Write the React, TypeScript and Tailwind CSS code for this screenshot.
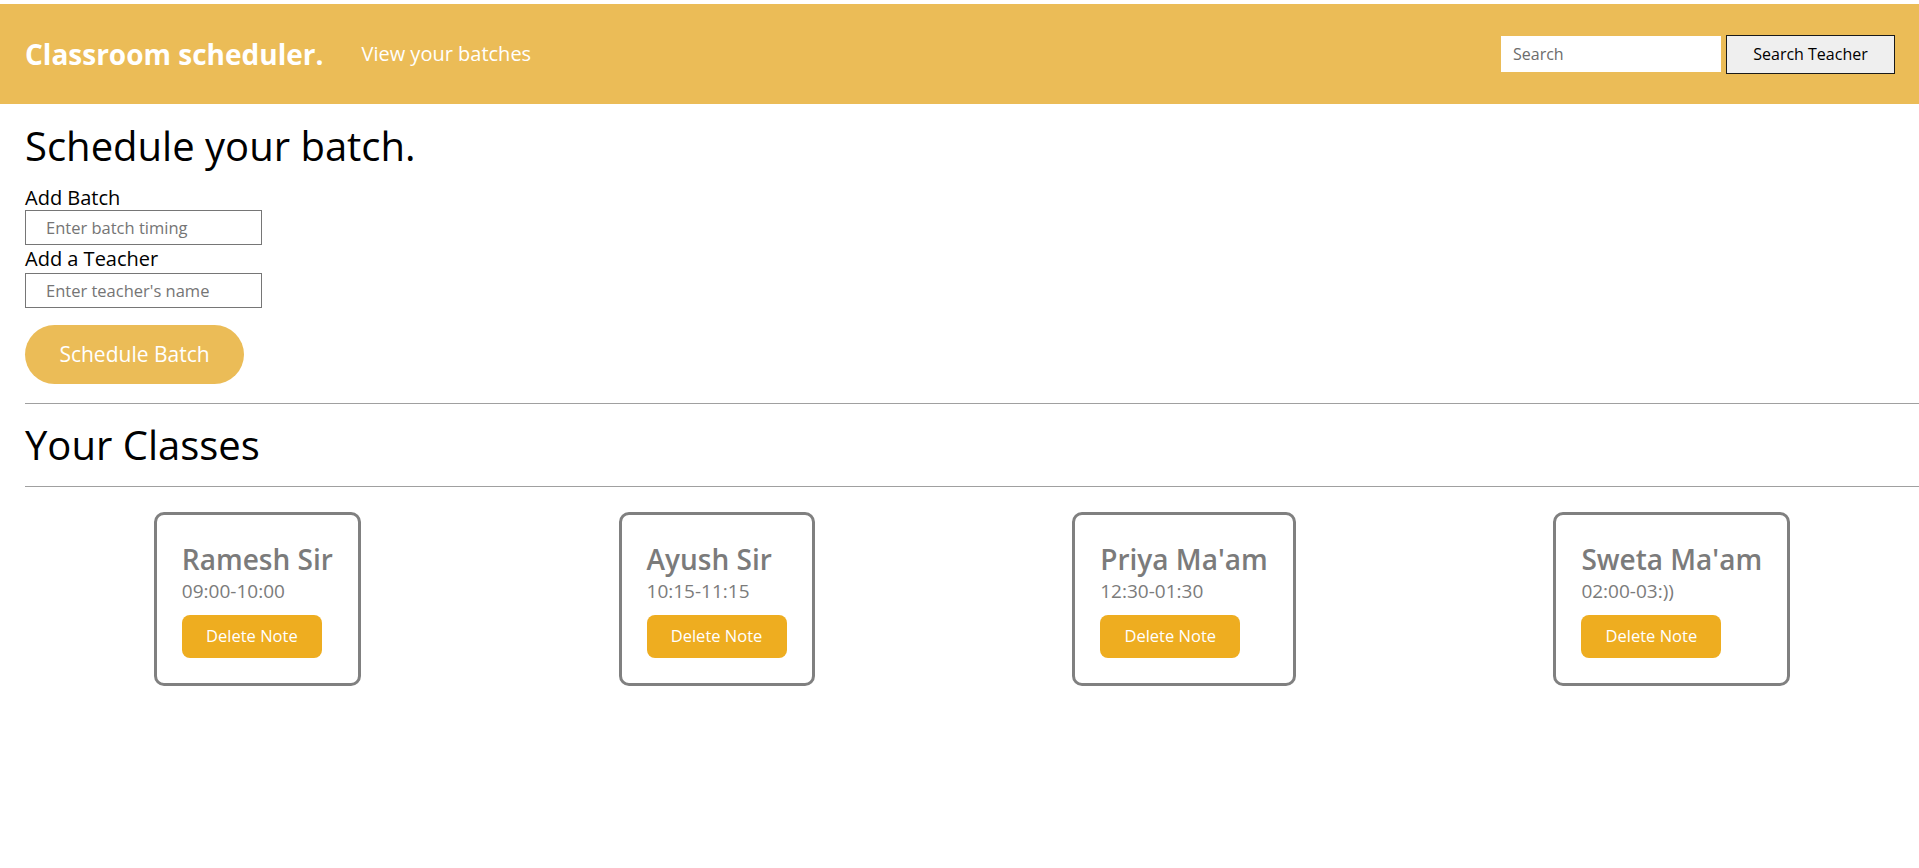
import React from "react";

const classes = [
  { name: "Ramesh Sir", time: "09:00-10:00" },
  { name: "Ayush Sir", time: "10:15-11:15" },
  { name: "Priya Ma'am", time: "12:30-01:30" },
  { name: "Sweta Ma'am", time: "02:00-03:))" },
];

function ClassCard({ name, time }: { name: string; time: string }) {
  return (
    <div className="border-[3px] border-[#808080] rounded-[10px] px-[25px] pt-[28px] pb-[25px]">
      <h3 className="text-[28px] leading-[33.6px] text-[#7b7b7b] font-semibold">{name}</h3>
      <p className="text-[19px] leading-[27px] text-[#7b7b7b] mt-[1px]">{time}</p>
      <button className="mt-[10px] w-[140px] h-[43px] rounded-[8px] bg-[#eead20] text-white text-[16.5px]">
        Delete Note
      </button>
    </div>
  );
}

export default function App() {
  return (
    // whole page
    <div className="font-['Open_Sans',sans-serif] text-black bg-white min-h-screen pt-[4px]">
      {/* navbar */}
      <nav className="h-[100px] bg-[#ebbc57] flex items-center justify-between pl-[25px] pr-[24px]">
        <div className="flex items-center">
          <span className="text-[28px] font-bold text-white">Classroom scheduler.</span>
          <a className="ml-[38px] text-[20px] text-white">View your batches</a>
        </div>
        <div className="flex items-center gap-[5px]">
          <input
            placeholder="Search"
            className="w-[220px] h-[36px] bg-white px-[12px] text-[16px] outline-none placeholder:text-[#6c6c6c]"
          />
          <button className="h-[39px] w-[169px] border border-[#1a1a1a] bg-[#efefef] text-[16px] text-black">
            Search Teacher
          </button>
        </div>
      </nav>

      {/* schedule form */}
      <div className="pl-[25px]">
        <h1 className="text-[40px] leading-[48px] font-medium pt-[18px]">Schedule your batch.</h1>
        <label className="block text-[20px] leading-[24px] mt-[16px]">Add Batch</label>
        <input
          placeholder="Enter batch timing"
          className="block w-[237px] h-[35px] border border-[#767676] pl-[20px] text-[16.5px] outline-none placeholder:text-[#757575]"
        />
        <label className="block text-[20px] leading-[24px] mt-[2px]">Add a Teacher</label>
        <input
          placeholder="Enter teacher's name"
          className="block w-[237px] h-[35px] border border-[#767676] pl-[20px] mt-[2px] text-[16.5px] outline-none placeholder:text-[#757575]"
        />
        <button className="mt-[17px] w-[219px] h-[59px] rounded-full bg-[#ebbc57] text-white text-[21px]">
          Schedule Batch
        </button>

        <hr className="mt-[19px] border-t border-[#a0a0a0]" />
        <h1 className="text-[40px] leading-[48px] font-medium mt-[17px]">Your Classes</h1>
        <hr className="mt-[17px] border-t border-[#a0a0a0]" />

        {/* cards */}
        <div className="flex justify-around items-start mt-[25px]">
          {classes.map((c) => (
            <ClassCard key={c.name} name={c.name} time={c.time} />
          ))}
        </div>
      </div>
    </div>
  );
}
